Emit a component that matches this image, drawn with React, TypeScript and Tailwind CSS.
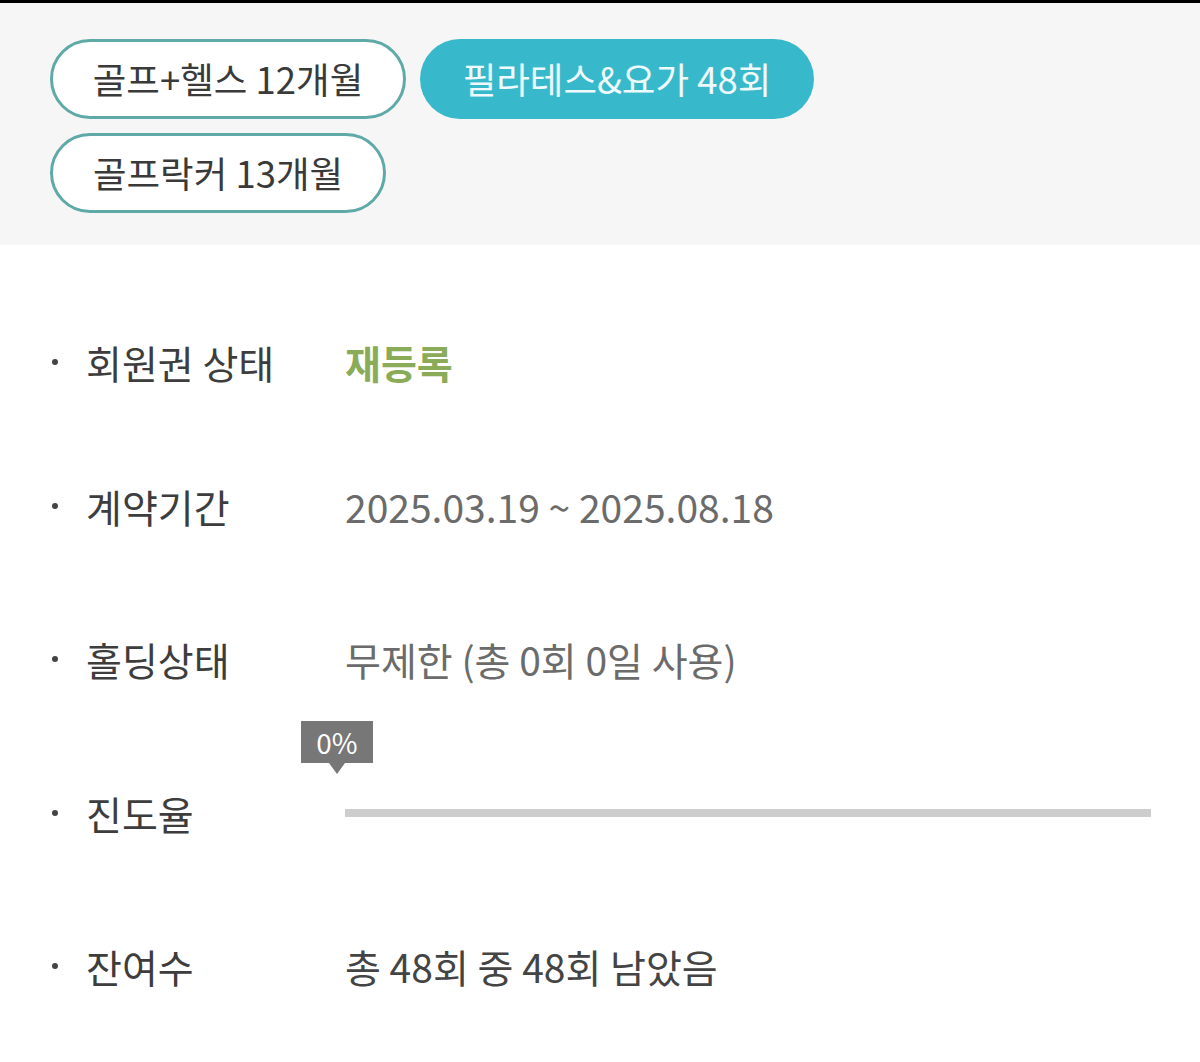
export default function App() {
  const font = { fontFamily: '"Noto Sans CJK KR", "Noto Sans", sans-serif' };
  return (
    <div className="min-h-screen bg-white" style={font}>
      <div className="h-[3px] bg-black" />
      {/* 회원권 탭 */}
      <div className="bg-[#f6f6f6] pl-[50px] pr-6 pt-[36px] pb-[32px]">
        <div className="flex flex-wrap gap-x-[14px] gap-y-[14px] w-[800px]">
          <button className="h-[80px] w-[356px] rounded-full border-[3px] border-[#5fa9a7] bg-white text-[36.5px] text-[#3a3a3a]">
            골프+헬스 12개월
          </button>
          <button className="h-[80px] w-[394px] rounded-full bg-[#38b9cb] text-[36.5px] text-[#eefafc]">
            필라테스&amp;요가 48회
          </button>
          <button className="h-[80px] w-[336px] rounded-full border-[3px] border-[#5fa9a7] bg-white text-[36.5px] text-[#3a3a3a]">
            골프락커 13개월
          </button>
        </div>
      </div>

      {/* 상세 정보 */}
      <div className="pl-[52px] pr-[49px]">
        <Row className="mt-[92px]" label="회원권 상태">
          <span className="text-[#8aab58] font-bold">재등록</span>
        </Row>
        <Row className="mt-[94px]" label="계약기간">
          <span className="text-[#6b6b6b]">2025.03.19 ~ 2025.08.18</span>
        </Row>
        <Row className="mt-[103px]" label="홀딩상태">
          <span className="text-[#6b6b6b]">무제한 (총 0회 0일 사용)</span>
        </Row>
        <Row className="mt-[104px]" label="진도율">
          <div className="relative flex-1 h-[8px] bg-[#cdcdcd]">
            <div className="absolute left-[-44px] bottom-[43px] flex flex-col items-center">
              <div className="w-[72px] h-[42px] bg-[#777777] text-white text-[28px] flex items-center justify-center leading-none">
                0%
              </div>
              <div className="w-0 h-0 border-l-[8px] border-r-[8px] border-t-[11px] border-l-transparent border-r-transparent border-t-[#777777]" />
            </div>
          </div>
        </Row>
        <Row className="mt-[103px]" label="잔여수">
          <span className="text-[#444444]">총 48회 중 48회 남았음</span>
        </Row>
      </div>
    </div>
  );
}

function Row({ label, children, className }: { label: string; children: React.ReactNode; className?: string }) {
  return (
    <div className={`flex items-center h-[50px] text-[39px] ${className ?? ""}`}>
      <span className="w-[6px] h-[6px] rounded-full bg-[#444] mr-[28px]" />
      <span className="w-[259px] text-[#3d3d3d]">{label}</span>
      {children}
    </div>
  );
}
